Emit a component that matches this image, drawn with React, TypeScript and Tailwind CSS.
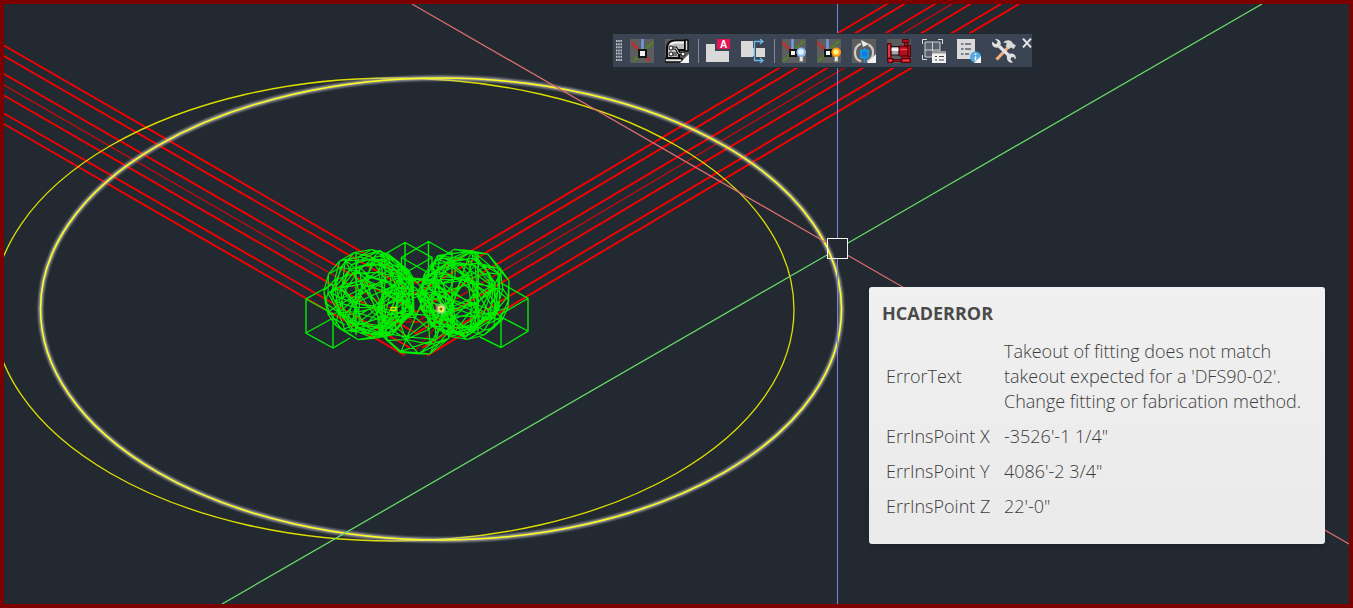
import React from 'react';

type Point = [number, number];
type Vec3 = [number, number, number];

const leftPipes = [
  { y: 45.5, thin: false },
  { y: 56, thin: false },
  { y: 74, thin: false },
  { y: 85, thin: true },
  { y: 95.5, thin: false },
  { y: 113.5, thin: false },
  { y: 124, thin: false },
];

const rightPipes = [
  { x: 887, thin: false },
  { x: 904.5, thin: false },
  { x: 935, thin: false },
  { x: 952, thin: true },
  { x: 970.5, thin: false },
  { x: 1001, thin: false },
  { x: 1019, thin: false },
];

// where each pair of pipe edges stops inside the fitting
const pipeEnds = [416, 416, 416, 416, 416, 410, 405];

const rotate = ([x, y, z]: Vec3, tilt: number, roll: number): Vec3 => {
  const y1 = y * Math.cos(tilt) - z * Math.sin(tilt);
  const z1 = y * Math.sin(tilt) + z * Math.cos(tilt);
  return [x * Math.cos(roll) - y1 * Math.sin(roll), x * Math.sin(roll) + y1 * Math.cos(roll), z1];
};

// faceted sphere: rings, meridians and one diagonal per facet
const sphereMesh = (
  cx: number,
  cy: number,
  r: number,
  tilt: number,
  roll: number,
  segments: number,
  rings: number,
  diagonals = true,
) => {
  const at = (ring: number, seg: number): Point => {
    const lat = (Math.PI * ring) / rings;
    const lon = (2 * Math.PI * seg) / segments;
    const [x, y] = rotate(
      [Math.sin(lat) * Math.cos(lon), Math.cos(lat), Math.sin(lat) * Math.sin(lon)],
      tilt,
      roll,
    );
    return [Math.round((cx + x * r) * 10) / 10, Math.round((cy + y * r) * 10) / 10];
  };
  let d = '';
  for (let i = 0; i < rings; i++) {
    for (let j = 0; j < segments; j++) {
      const a = at(i, j);
      const b = at(i + 1, j);
      const c = at(i + 1, j + 1);
      d += `M${a}L${b}L${c}`;
      if (diagonals) d += `L${a}`;
    }
  }
  return d;
};

const fittingMesh = [
  sphereMesh(369, 295, 46, 0.7, 1.05, 11, 6, false),
  sphereMesh(374, 294, 44, 1.2, -0.5, 7, 5),
  sphereMesh(377, 299, 38, 0.3, 0.3, 6, 4),
  sphereMesh(465, 294, 46, 0.7, -1.05, 11, 6, false),
  sphereMesh(460, 293, 44, 1.2, 0.5, 7, 5),
  sphereMesh(457, 298, 38, 0.3, -0.3, 6, 4),
  sphereMesh(416, 316, 41, 0.9, 0.4, 8, 5),
].join('');

const boxMesh =
  'M350 338L333 348L306 333V299L333 284M306 299L333 314V348M306 333L333 318L345 325M333 284V300' +
  'M480 337L501 347.5L528 331V298.5L501 283M528 298.5L501 314V347.5M528 331L501 317L488 324' +
  'M380 257L405 242.5L432 257.5V275M401.500 275V257.5L428.500 241.500L452 255' +
  'M405 242.5V275M428.500 241.500V275M401.500 257.5L432 275M432 257.5L401.500 275M405 275L417 282L430 275' +
  'M356 252V335M382 252V335M452 252V335M478 252V335';

const Drawing: React.FC = () => (
  <svg className="absolute inset-0 h-full w-full" aria-label="Model space" role="img">
    <defs>
      <filter id="soft" x="-50%" y="-50%" width="200%" height="200%">
        <feGaussianBlur stdDeviation="1" />
      </filter>
    </defs>
    <g transform="translate(-4 -4)" fill="none">
      <g stroke="#fa0000">
        {leftPipes.map(({ y, thin }, i) => (
          <line
            key={y}
            x1="4"
            y1={y}
            x2={pipeEnds[i]}
            y2={y + (pipeEnds[i] - 4) * 0.577}
            strokeWidth={thin ? 1.2 : 1.9}
            opacity={thin ? 0.85 : 1}
          />
        ))}
        {rightPipes.map(({ x, thin }, i) => {
          const end = 832 - pipeEnds[i];
          return (
            <line
              key={x}
              x1={x}
              y1="4"
              x2={end}
              y2={4 + (x - end) * 0.594}
              strokeWidth={thin ? 1.2 : 1.9}
              opacity={thin ? 0.85 : 1}
            />
          );
        })}
        <path d="M393 310L404 338L416 350L440 322M378 322L450 322M396 300L425 290L440 312" />
      </g>

      <ellipse cx="393.500" cy="309.500" rx="400.500" ry="231.500" stroke="#dede00" strokeWidth="1.300" />
      <ellipse cx="441" cy="309" rx="400.500" ry="231" stroke="#c4c4c4" strokeWidth="4.500" opacity=".75" filter="url(#soft)" />
      <ellipse cx="441" cy="309" rx="400.500" ry="231" stroke="#ffff1c" strokeWidth="1.500" />

      <path d={fittingMesh} stroke="#00ee00" strokeWidth="1.200" />
      <path d={boxMesh} stroke="#00ee00" strokeWidth="1.400" />

      <circle cx="441" cy="309" r="5" fill="#d8d8b0" opacity=".75" filter="url(#soft)" />
      <rect x="391" y="307.500" width="5" height="3" stroke="#e6e600" strokeWidth="1.200" />
      <rect x="439" y="307" width="4" height="4" fill="#8a6a20" stroke="#ffff50" strokeWidth="1.300" />

      <path d="M412 4L827 243M848 255.500L1349 544" stroke="#dc6e70" strokeWidth="1.200" />
      <path d="M222 604L827 255M848 243L1262 4" stroke="#68d868" strokeWidth="1.300" />
      <path d="M837.500 4V238M837.500 259V604" stroke="#8080e4" />
      <rect x="827.500" y="238.500" width="20" height="20" stroke="#f4f4f4" />
    </g>
  </svg>
);

const CornerFold = () => <path d="M24 15V24H15Z" fill="#f4f4f4" />;

const AxesIcon = () => (
  <svg viewBox="0 0 24 24" className="h-6 w-6">
    <path d="M0 0H24V24H0Z" fill="#5d5d5d" />
    <path d="M12.500 0V10" stroke="#6f9ce6" strokeWidth="2.500" />
    <path d="M1 3L20 22" stroke="#d02626" strokeWidth="2" />
    <path d="M23 3L4 22" stroke="#4e8a1c" strokeWidth="2" />
    <path d="M9 11H16V18H9Z" fill="#f2f2f2" stroke="#151515" strokeWidth="2" />
  </svg>
);

const ElbowIcon = () => (
  <svg viewBox="0 0 24 24" className="h-6 w-6">
    <path d="M0 0H24V24H0Z" fill="#5d5d5d" />
    <path d="M2 19V8Q3 1.500 10 1.500H20V11H14V19Z" fill="#bcbcbc" stroke="#080808" strokeWidth="2" />
    <path d="M5 5.500Q8 3.500 11 3.500H19" fill="none" stroke="#f5f5f5" strokeWidth="2" />
    <path d="M20 1H23V12H20Z" fill="#dedede" stroke="#080808" strokeWidth="1.500" />
    <path d="M0 19.500H17V23H0Z" fill="#e4e4e4" stroke="#080808" strokeWidth="1.500" />
    <path d="M6 9H11L14 14.500H18M6 15H12" fill="none" stroke="#151515" strokeWidth="3" />
    <path d="M6 9H11L14 14.500H18M6 15H12" fill="none" stroke="#d0d0d0" />
    <g fill="#fff" stroke="#111">
      <circle cx="6" cy="9" r="2" />
      <circle cx="6" cy="15" r="2" />
      <circle cx="18" cy="15" r="2" />
    </g>
    <CornerFold />
  </svg>
);

const TagBlockIcon = () => (
  <svg viewBox="0 0 24 24" className="h-6 w-6 overflow-visible">
    <path d="M0 5H9V12H23V23H0Z" fill="#d9d9d9" />
    <path d="M11 0H24V10H11Z" fill="#ea1250" />
    <text x="17.500" y="9" textAnchor="middle" fontSize="10" fontWeight="800" fill="#fff" className="font-['Liberation_Sans',sans-serif]">
      A
    </text>
  </svg>
);

const SplitBlockIcon = () => (
  <svg viewBox="0 0 24 24" className="h-6 w-6">
    <path d="M0 2H12V18H0ZM15 9H24V18H15ZM12 9H13V17H12Z" fill="#d9d9d9" />
    <path d="M22 2.500H13.500V21.500H22M19 0L22 2.500L19 5M19 19L22 21.500L19 24" fill="none" stroke="#6cb8f0" strokeWidth="1.300" />
  </svg>
);

const LampIcon: React.FC<{ glow: string; core: string }> = ({ glow, core }) => (
  <svg viewBox="0 0 24 24" className="h-6 w-6">
    <path d="M0 0H24V24H0Z" fill="#5d5d5d" />
    <path d="M10.500 0V10" stroke="#6f9ce6" strokeWidth="2.500" />
    <path d="M0 3L9 12" stroke="#d02626" strokeWidth="2" />
    <path d="M22 2L14 9M1 22L9 15" stroke="#4e8a1c" strokeWidth="2" strokeDasharray="5 1" />
    <path d="M8 11H14V17H8Z" fill="#f2f2f2" stroke="#151515" strokeWidth="2" />
    <path d="M17.500 17H21V22.500H17.500Z" fill="#e6e6e6" stroke="#777" strokeWidth=".5" />
    <circle cx="19.200" cy="13.300" r="4.800" fill={glow} />
    <circle cx="19" cy="13" r="2.800" fill={core} />
  </svg>
);

const RotateIcon = () => (
  <svg viewBox="0 0 24 24" className="h-6 w-6">
    <path d="M0 0H24V24H0Z" fill="#5d5d5d" />
    <path d="M9 22.500A9.500 9.500 0 0 1 9 4.800M16.500 5.500A9.500 9.500 0 0 1 15 22.500" fill="none" stroke="#cdcdcd" strokeWidth="2.200" />
    <path d="M9 1L17 5L11 8Z" fill="#e8e8e8" />
    <path d="M12.500 9V24" stroke="#1096e8" strokeWidth="1.500" />
    <path d="M9 11.500H16V18.500H9Z" fill="#1478dc" stroke="#08a4f4" strokeWidth="1.500" />
    <CornerFold />
  </svg>
);

const ValveIcon = () => (
  <svg viewBox="0 0 24 24" className="h-6 w-6">
    <path d="M0 0H24V24H0Z" fill="#5d5d5d" />
    <path d="M4 7.500H12V16H4Z" fill="#a8a8b4" stroke="#151515" />
    <path d="M4 10.500H12" stroke="#fff" strokeWidth="2.500" />
    <g fill="#b40e1c" stroke="#3c0006" strokeWidth=".8">
      <path d="M.5 4.500H4V19.500H.5Z" />
      <path d="M12 7H21V17H12Z" />
      <path d="M17.500 3H20.500V7H17.500Z" />
      <path d="M15.500 .5H22V3.500H15.500Z" />
      <path d="M21 6H23.500V18H21Z" />
      <path d="M.5 19.500H6V23.500H.5ZM14 19.500H23.500V23.500H14Z" />
      <path d="M15 17H22V19.500H15ZM6 20.500H14V22.500H6Z" />
    </g>
    <path d="M13.500 10.500H20.500M2 6V18M2 21.500H5M16 21.500H22" stroke="#f04450" strokeWidth="1.600" />
  </svg>
);

const ViewListIcon = () => (
  <svg viewBox="0 0 24 24" className="h-6 w-6">
    <path d="M5 .5H.5V5M16 .5H20.500V5M.5 16V20.500H5" fill="none" stroke="#dedede" />
    <path d="M3 3H18V18H3ZM10.500 3V18M3 11H18" fill="#596170" stroke="#d0d0d0" />
    <path d="M10 12H24V24H10Z" fill="#f0f0f0" />
    <path d="M10 12H24V14.500H10Z" fill="#989898" />
    <path d="M13 17.500H15M17 17.500H22M13 21H15M17 21H22" stroke="#444" strokeWidth="1.200" />
  </svg>
);

const ReportIcon = () => (
  <svg viewBox="0 0 24 24" className="h-6 w-6">
    <path d="M0 0H18V20H0Z" fill="#dadada" />
    <path d="M4 5H6.500M8 5H14M4 10H6.500M8 10H14M4 15H6.500M8 15H12" stroke="#59616a" strokeWidth="1.300" />
    <circle cx="18.500" cy="18" r="5.500" fill="#54a8e4" />
    <path d="M24 17V24H17Z" fill="#f4f4f4" />
    <path d="M18.500 14.500V16M18.500 17.500V21.500" stroke="#fff" strokeWidth="1.500" />
  </svg>
);

const ToolsIcon = () => (
  <svg viewBox="0 0 24 24" className="h-6 w-6">
    <path d="M4.500 20.500L16 8.500" stroke="#f2b084" strokeWidth="3.200" />
    <path d="M11 3.500Q15 .2 19 2L21.500 5L24 6.500L21.500 10L19 8.500L17 10L13.500 7L15 4.500Q13 3.500 11 3.500Z" fill="#d8d8d8" />
    <path
      d="M3 0L5.500 2.500L5 4.500L3 5L.5 2.500Q-1 6 2 8Q4 9 6 8.500L15 17Q14.200 21 17 23Q19 24 21 23.500L18.500 20.500L19 18.500L21.500 18L23.500 20.500Q24.500 17 22 15.300Q20 14 17.500 14.800L8.500 6.300Q9.500 1.500 5.500 .2Q4 -.2 3 0Z"
      fill="#e0e0e0"
    />
  </svg>
);

const toolGroups = [
  [
    { name: 'Insertion point', icon: <AxesIcon /> },
    { name: 'Elbow', icon: <ElbowIcon /> },
  ],
  [
    { name: 'Label block', icon: <TagBlockIcon /> },
    { name: 'Split block', icon: <SplitBlockIcon /> },
  ],
  [
    { name: 'Lights off', icon: <LampIcon glow="#8dbdf0" core="#e4f2ff" /> },
    { name: 'Lights on', icon: <LampIcon glow="#ff9c0c" core="#fff27c" /> },
    { name: 'Rotate', icon: <RotateIcon /> },
    { name: 'Valve', icon: <ValveIcon /> },
    { name: 'View list', icon: <ViewListIcon /> },
    { name: 'Report', icon: <ReportIcon /> },
    { name: 'Tools', icon: <ToolsIcon /> },
  ],
];

const Toolbar: React.FC = () => (
  <div
    role="toolbar"
    aria-label="Fabrication"
    className="absolute left-[609px] top-[30px] flex h-[33px] items-center bg-[#3b4453] pl-[3px] outline outline-[#222930]"
  >
    <svg viewBox="0 0 6 21" className="mr-2 h-[21px] w-1.5" aria-hidden="true">
      <path d="M.8 0V21M3 0V21M5.200 0V21" stroke="#d4d7dc" strokeWidth="1.300" strokeDasharray="2 1.150" />
    </svg>
    {toolGroups.map((group, i) => (
      <div
        key={group[0].name}
        className={`flex gap-[11px] ${i > 0 ? 'ml-[9px] border-l border-[#808896] pl-[7px]' : ''}`}
      >
        {group.map((tool) => (
          <button key={tool.name} type="button" aria-label={tool.name} className="h-6 w-6">
            {tool.icon}
          </button>
        ))}
      </div>
    ))}
    <button type="button" aria-label="Close" className="ml-1.5 self-start pt-1">
      <svg viewBox="0 0 10 10" className="h-2.5 w-2.5">
        <path d="M1 .5L9 9.500M9 .5L1 9.500" stroke="#e2e4e8" strokeWidth="1.900" />
      </svg>
    </button>
  </div>
);

const errorRows = [
  { label: 'ErrorText', value: "Takeout of fitting does not match takeout expected for a 'DFS90-02'. Change fitting or fabrication method." },
  { label: 'ErrInsPoint X', value: '-3526\'-1 1/4"' },
  { label: 'ErrInsPoint Y', value: '4086\'-2 3/4"' },
  { label: 'ErrInsPoint Z', value: '22\'-0"' },
];

const ErrorTooltip: React.FC = () => (
  <section className="absolute left-[865px] top-[283px] w-[456px] rounded-[3px] bg-linear-to-b from-[#f0f0f0] to-[#eaeaea] px-[13px] pb-5 pt-3.5 text-[#4a4a4a] shadow-md">
    <h2 className="text-[18px] font-bold leading-[25px]">HCADERROR</h2>
    <table className="mt-2 w-full text-left text-[18px] font-light leading-[25px] text-[#3c3c3c]">
      <tbody>
        {errorRows.map((row) => (
          <tr key={row.label}>
            <th scope="row" className="w-[122px] whitespace-nowrap py-[5px] pl-1 font-light">
              {row.label}
            </th>
            <td className="py-[5px]">{row.value}</td>
          </tr>
        ))}
      </tbody>
    </table>
  </section>
);

const App: React.FC = () => {
  return (
    <main className="relative min-h-screen overflow-hidden border-4 border-[#7c0000] bg-[#222930] font-['Open_Sans','Noto_Sans',sans-serif]">
      <Drawing />
      <Toolbar />
      <ErrorTooltip />
    </main>
  );
};

export default App;
